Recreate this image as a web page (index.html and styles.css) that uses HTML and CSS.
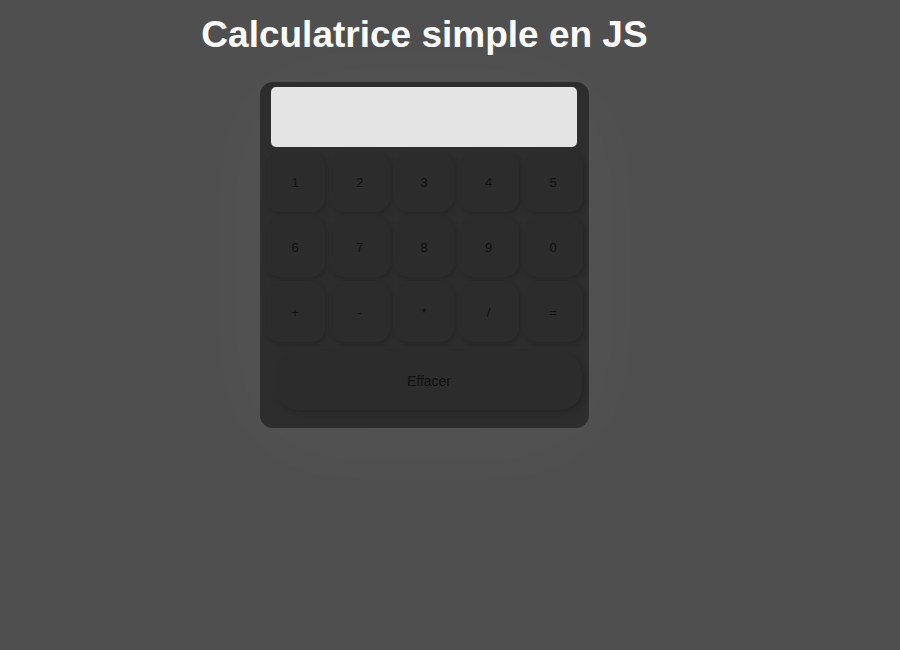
FILE: index.html
```html
<!DOCTYPE html>
<html lang="fr">
<head>
<meta charset="utf-8">
<title>Calculatrice simple en JS</title>
<link rel="stylesheet" href="styles.css">
</head>
<body>
<div class="page">
  <h1 class="title">Calculatrice simple en JS</h1>
  <div class="calc">
    <input class="display" type="text" readonly>
    <div class="keys">
      <button class="key">1</button>
      <button class="key">2</button>
      <button class="key">3</button>
      <button class="key">4</button>
      <button class="key">5</button>
      <button class="key">6</button>
      <button class="key">7</button>
      <button class="key">8</button>
      <button class="key">9</button>
      <button class="key">0</button>
      <button class="key">+</button>
      <button class="key">-</button>
      <button class="key">*</button>
      <button class="key">/</button>
      <button class="key">=</button>
    </div>
    <button class="clear">Effacer</button>
  </div>
</div>
</body>
</html>
```
FILE: styles.css
```css
html, body {
  margin: 0;
  padding: 0;
  background: #4f4f4f;
  font-family: "Liberation Sans", Arial, sans-serif;
  height: 100%;
}
.page {
  width: 849px;
  display: flex;
  flex-direction: column;
  align-items: center;
}
.title {
  margin: 14px 0 27px;
  font-size: 37px;
  line-height: 41px;
  font-weight: bold;
  color: #fbfbfb;
}
.calc {
  width: 329px;
  height: 346px;
  box-sizing: border-box;
  background: #2d2d2d;
  border-radius: 13px;
  padding: 5px 12px 0 11px;
  box-shadow: 0 10px 110px rgba(255, 255, 255, 0.035);
  display: flex;
  flex-direction: column;
}
.display {
  width: 306px;
  height: 60px;
  box-sizing: border-box;
  border: none;
  border-radius: 5px;
  background: #e4e4e4;
  margin: 0;
  padding: 0 10px;
  outline: none;
}
.keys {
  margin: 5px 0 0 -6px;
  display: grid;
  grid-template-columns: repeat(5, 60px);
  grid-auto-rows: 60px;
  column-gap: 4.5px;
  row-gap: 5px;
}
.key {
  border: none;
  margin: 0;
  padding: 0;
  border-radius: 14px;
  background: #2c2c2c;
  color: #111111;
  font-family: "Liberation Sans", Arial, sans-serif;
  font-size: 13px;
  box-shadow: 2px 2px 4px rgba(0, 0, 0, 0.15), -1px -1px 3px rgba(255, 255, 255, 0.02);
}
.clear {
  margin: 10px 0 0 5px;
  width: 306px;
  height: 58px;
  border: none;
  padding: 0;
  border-radius: 22px;
  background: #2c2c2c;
  color: #111111;
  font-family: "Liberation Sans", Arial, sans-serif;
  font-size: 14px;
  box-shadow: 3px 3px 6px rgba(0, 0, 0, 0.18), -1px -1px 3px rgba(255, 255, 255, 0.02);
}
```
